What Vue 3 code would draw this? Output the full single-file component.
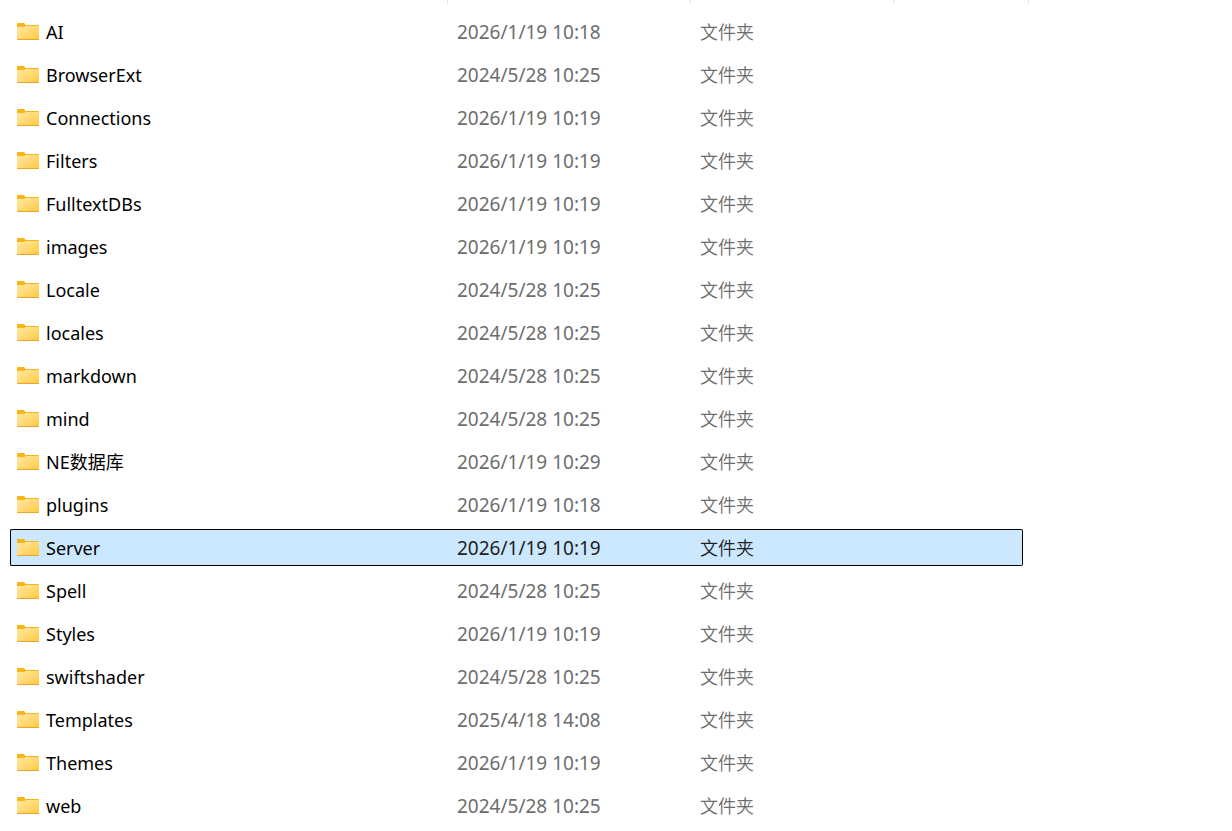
<template>
  <div class="explorer">
    <svg class="sprite" aria-hidden="true">
      <defs>
        <linearGradient id="folder-front" x1="0" y1="0" x2="1" y2="1">
          <stop offset="0" stop-color="#ffe8a2" />
          <stop offset="0.5" stop-color="#ffd975" />
          <stop offset="1" stop-color="#ffc83c" />
        </linearGradient>
        <symbol id="folder" viewBox="0 0 22 17">
          <path d="M0 1Q0 0 1 0H6.6Q7.3 0 7.7.6L8.3 2H21Q22 2 22 3V8H0Z" fill="#f8b517" />
          <path d="M0 4H7.2L8.6 3H22V16Q22 17 21 17H1Q0 17 0 16Z" fill="url(#folder-front)" />
          <path d="M0 16H22Q22 17 21 17H1Q0 17 0 16Z" fill="#e9a62a" />
        </symbol>
      </defs>
    </svg>

    <!-- Separadores de columnas -->
    <div class="column-bar">
      <span class="col-name"></span>
      <span class="tick col-date"></span>
      <span class="tick col-type"></span>
      <span class="tick tick-end"></span>
    </div>

    <!-- Lista de carpetas -->
    <div class="file-list">
      <table>
        <colgroup>
          <col />
          <col class="col-date" />
          <col class="col-type" />
          <col class="col-size" />
        </colgroup>
        <tbody>
          <tr
              v-for="folder in folders"
              :key="folder.name"
              :class="{ selected: folder.name === selected }"
              @click="selected = folder.name"
          >
            <td class="name">
              <div class="name-cell">
                <svg class="folder-icon" aria-hidden="true"><use href="#folder" /></svg>
                <span>{{ folder.name }}</span>
              </div>
            </td>
            <td class="date">{{ folder.date }}</td>
            <td class="type">文件夹</td>
            <td></td>
          </tr>
        </tbody>
      </table>
    </div>
  </div>
</template>

<script setup>
import { ref } from 'vue'

const selected = ref('Server')

const folders = [
  { name: 'AI', date: '2026/1/19 10:18' },
  { name: 'BrowserExt', date: '2024/5/28 10:25' },
  { name: 'Connections', date: '2026/1/19 10:19' },
  { name: 'Filters', date: '2026/1/19 10:19' },
  { name: 'FulltextDBs', date: '2026/1/19 10:19' },
  { name: 'images', date: '2026/1/19 10:19' },
  { name: 'Locale', date: '2024/5/28 10:25' },
  { name: 'locales', date: '2024/5/28 10:25' },
  { name: 'markdown', date: '2024/5/28 10:25' },
  { name: 'mind', date: '2024/5/28 10:25' },
  { name: 'NE数据库', date: '2026/1/19 10:29' },
  { name: 'plugins', date: '2026/1/19 10:18' },
  { name: 'Server', date: '2026/1/19 10:19' },
  { name: 'Spell', date: '2024/5/28 10:25' },
  { name: 'Styles', date: '2026/1/19 10:19' },
  { name: 'swiftshader', date: '2024/5/28 10:25' },
  { name: 'Templates', date: '2025/4/18 14:08' },
  { name: 'Themes', date: '2026/1/19 10:19' },
  { name: 'web', date: '2024/5/28 10:25' }
]
</script>

<style>
body {
  background-color: #ffffff;
}
</style>

<style scoped>
.explorer {
  font-family: "Noto Sans", "Noto Sans CJK SC", sans-serif;
  font-size: 18px;
  line-height: 24px;
  color: #000000;
}

.sprite {
  display: block;
  width: 0;
  height: 0;
}

.column-bar {
  display: flex;
  height: 4px;
  padding-right: 203px;
}

.col-name {
  flex: 1;
}

.col-date {
  width: 243px;
}

.col-type {
  width: 203px;
}

.col-size {
  width: 130px;
}

.tick {
  box-sizing: border-box;
  border-left: 1px solid #e5e5e5;
}

.tick-end {
  width: 136px;
  border-right: 1px solid #e5e5e5;
}

.file-list {
  padding: 3px 209px 0 10px;
}

table {
  width: 100%;
  table-layout: fixed;
  border-collapse: separate;
  border-spacing: 0 6px;
}

td {
  box-sizing: border-box;
  height: 37px;
  padding: 0 0 0 10px;
  border: 0 solid transparent;
  border-width: 1px 0;
  white-space: nowrap;
  cursor: default;
}

td:first-child {
  padding-left: 6px;
  border-left-width: 1px;
  border-radius: 2px 0 0 2px;
}

td:last-child {
  border-right-width: 1px;
  border-radius: 0 2px 2px 0;
}

.name-cell {
  display: flex;
  align-items: center;
  gap: 7px;
}

.folder-icon {
  flex: none;
  width: 22px;
  height: 17px;
}

.date,
.type {
  color: #6d6d6d;
}

.date {
  font-size: 19px;
}

.type {
  font-weight: 350;
}

.selected td {
  background-color: #cce8ff;
  border-color: #000000;
}

.selected .date,
.selected .type {
  color: #222222;
}
</style>
